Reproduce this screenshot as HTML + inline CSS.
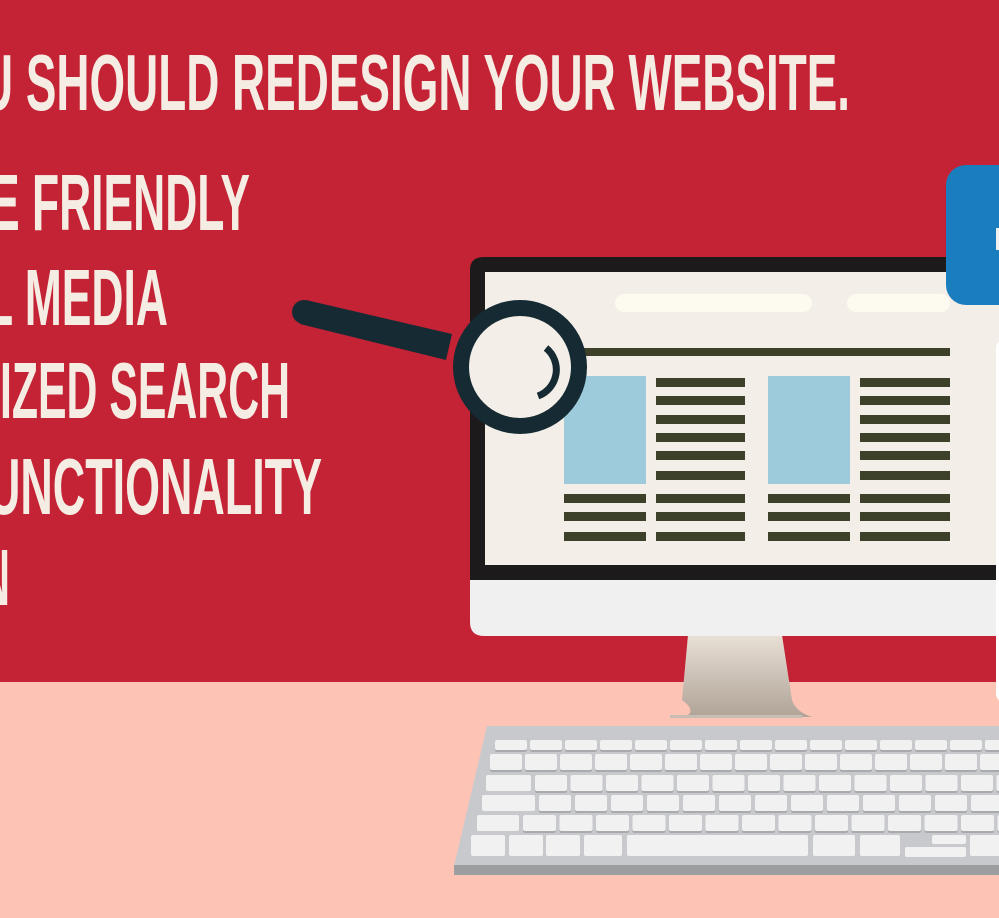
<!DOCTYPE html>
<html><head><meta charset="utf-8"><style>
html,body{margin:0;padding:0;width:999px;height:918px;overflow:hidden;background:#fdc4b5}
</style></head><body>
<svg width="999" height="918" viewBox="0 0 999 918" xmlns="http://www.w3.org/2000/svg">
<defs>
<linearGradient id="st" x1="0" y1="0" x2="0" y2="1"><stop offset="0" stop-color="#e8e0d6"/><stop offset="1" stop-color="#b0a397"/></linearGradient>
<pattern id="k1" x="495" y="0" width="35" height="918" patternUnits="userSpaceOnUse"><rect x="0" y="740" width="32" height="12" rx="2" fill="#a9aaad"/><rect x="0" y="740" width="32" height="10" rx="2" fill="#f1f1f1"/></pattern>
<pattern id="k2" x="490" y="0" width="35" height="918" patternUnits="userSpaceOnUse"><rect x="0" y="754" width="32" height="18" rx="2" fill="#a9aaad"/><rect x="0" y="754" width="32" height="16" rx="2" fill="#f1f1f1"/></pattern>
<pattern id="k3" x="535" y="0" width="35.5" height="918" patternUnits="userSpaceOnUse"><rect x="0" y="775" width="32" height="18" rx="2" fill="#a9aaad"/><rect x="0" y="775" width="32" height="16" rx="2" fill="#f1f1f1"/></pattern>
<pattern id="k4" x="539" y="0" width="36" height="918" patternUnits="userSpaceOnUse"><rect x="0" y="795" width="32" height="18" rx="2" fill="#a9aaad"/><rect x="0" y="795" width="32" height="16" rx="2" fill="#f1f1f1"/></pattern>
<pattern id="k5" x="523" y="0" width="36.5" height="918" patternUnits="userSpaceOnUse"><rect x="0" y="815" width="33" height="18" rx="2" fill="#a9aaad"/><rect x="0" y="815" width="33" height="16" rx="2" fill="#f1f1f1"/></pattern>
</defs>
<rect width="999" height="682" fill="#c42336"/>
<rect y="682" width="999" height="236" fill="#fdc4b5"/>
<g fill="#f5ede3" font-family="Liberation Sans Narrow, Liberation Sans, sans-serif" font-weight="bold" font-size="80">
<text x="-20" y="110" textLength="870" lengthAdjust="spacingAndGlyphs">U SHOULD REDESIGN YOUR WEBSITE.</text>
<text x="-10" y="230" textLength="260" lengthAdjust="spacingAndGlyphs">E FRIENDLY</text>
<text x="-14" y="325" textLength="182" lengthAdjust="spacingAndGlyphs">L MEDIA</text>
<text x="0" y="418" textLength="290" lengthAdjust="spacingAndGlyphs">IZED SEARCH</text>
<text x="-12" y="514" textLength="334" lengthAdjust="spacingAndGlyphs">UNCTIONALITY</text>
<text x="-20" y="605" textLength="30" lengthAdjust="spacingAndGlyphs">N</text>
</g>
<!-- stand -->
<path d="M688 635 L782 635 L792 700 Q796 712 812 717 L684 717 Q698 712 682 700 Z" fill="url(#st)"/>
<rect x="670" y="715" width="132" height="3" fill="#c8bdb2"/>
<!-- monitor -->
<path d="M470 580 L1010 580 L1010 636 L484 636 Q470 636 470 622 Z" fill="#f0f0f0"/>
<path d="M470 580 L470 270 Q470 257 484 257 L1010 257 L1010 580 Z" fill="#1c1a1a"/>
<rect x="485" y="272" width="520" height="293" fill="#f3eee7"/>
<rect x="615" y="294" width="197" height="18" rx="9" fill="#fdfaf0"/>
<rect x="847" y="294" width="103" height="18" rx="9" fill="#fdfaf0"/>
<rect x="566" y="348" width="384" height="8" fill="#3e4129"/>
<rect x="564" y="376" width="82" height="108" fill="#9ecbdb"/>
<rect x="768" y="376" width="82" height="108" fill="#9ecbdb"/>
<g fill="#3e4129">
<rect x="656" y="378" width="89" height="9"/><rect x="656" y="396" width="89" height="9"/><rect x="656" y="415" width="89" height="9"/><rect x="656" y="433" width="89" height="9"/><rect x="656" y="451" width="89" height="9"/><rect x="656" y="471" width="89" height="9"/>
<rect x="860" y="378" width="90" height="9"/><rect x="860" y="396" width="90" height="9"/><rect x="860" y="415" width="90" height="9"/><rect x="860" y="433" width="90" height="9"/><rect x="860" y="451" width="90" height="9"/><rect x="860" y="471" width="90" height="9"/>
<rect x="564" y="494" width="82" height="9"/><rect x="564" y="512" width="82" height="9"/><rect x="564" y="532" width="82" height="9"/>
<rect x="656" y="494" width="89" height="9"/><rect x="656" y="512" width="89" height="9"/><rect x="656" y="532" width="89" height="9"/>
<rect x="768" y="494" width="82" height="9"/><rect x="768" y="512" width="82" height="9"/><rect x="768" y="532" width="82" height="9"/>
<rect x="860" y="494" width="90" height="9"/><rect x="860" y="512" width="90" height="9"/><rect x="860" y="532" width="90" height="9"/>
</g>
<!-- right panels (over monitor) -->
<rect x="946" y="165" width="80" height="140" rx="20" fill="#1a7dbd"/>
<rect x="996" y="228" width="4" height="22" fill="#f0f0f0"/>
<rect x="996" y="340" width="30" height="362" rx="8" fill="#fff"/>
<!-- magnifier -->
<path d="M306 300 L452 334 L446 360 L300 324 Z" fill="#152a33"/>
<circle cx="304" cy="312" r="12" fill="#152a33"/>
<circle cx="520" cy="367" r="59" fill="#f3eee7" stroke="#152a33" stroke-width="16"/>
<path d="M546 348 A28 28 0 0 1 538 396" fill="none" stroke="#152a33" stroke-width="7"/>
<!-- keyboard -->
<path d="M487 726 L1010 726 L1010 866 L454 866 Z" fill="#c8c9cc"/>
<rect x="454" y="865" width="556" height="10" fill="#9d9ea0"/>
<rect x="495" y="738" width="515" height="16" fill="url(#k1)"/>
<rect x="490" y="752" width="520" height="22" fill="url(#k2)"/>
<g fill="#f1f1f1">
<rect x="486" y="775" width="45" height="16" rx="2"/>
<rect x="482" y="795" width="53" height="16" rx="2"/>
<rect x="477" y="815" width="42" height="16" rx="2"/>
</g>
<rect x="535" y="773" width="475" height="22" fill="url(#k3)"/>
<rect x="539" y="793" width="471" height="22" fill="url(#k4)"/>
<rect x="523" y="813" width="487" height="22" fill="url(#k5)"/>
<g fill="#f1f1f1">
<rect x="471" y="835" width="34" height="21" rx="2"/>
<rect x="509" y="835" width="34" height="21" rx="2"/>
<rect x="546" y="835" width="34" height="21" rx="2"/>
<rect x="584" y="835" width="38" height="21" rx="2"/>
<rect x="627" y="835" width="181" height="21" rx="2"/>
<rect x="813" y="835" width="42" height="21" rx="2"/>
<rect x="860" y="835" width="40" height="21" rx="2"/>
<rect x="905" y="847" width="32" height="10" rx="2"/>
<rect x="932" y="835" width="34" height="9" rx="2"/>
<rect x="932" y="847" width="34" height="10" rx="2"/>
<rect x="970" y="835" width="34" height="21" rx="2"/>
</g>
</svg>
</body></html>
